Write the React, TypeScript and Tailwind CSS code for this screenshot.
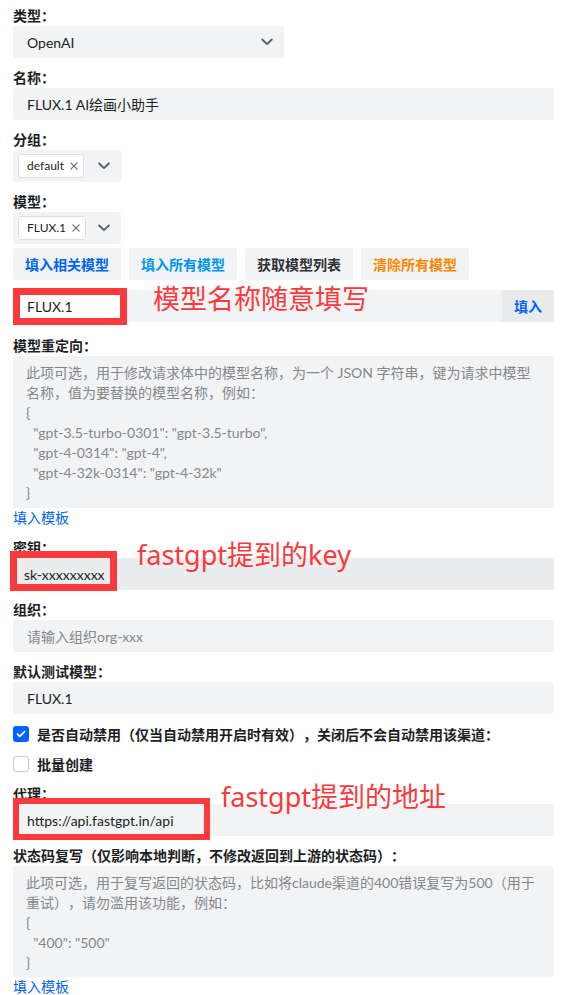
import React from "react";

const Label = ({ children }: { children: React.ReactNode }) => (
  <div className="h-[20px] leading-[20px] font-semibold text-[#1c1f23]">{children}</div>
);

const Chevron = () => (
  <svg width="12" height="8" viewBox="0 0 12 8" fill="none">
    <path d="M1.2 1.5l4.8 4.6 4.8-4.6" stroke="#5b5e62" strokeWidth="1.9" strokeLinecap="round" strokeLinejoin="round" />
  </svg>
);

const Tag = ({ text }: { text: string }) => (
  <div className="flex h-[24px] items-center gap-[6px] rounded-[3px] border border-[#dcdee0] bg-white pl-[8px] pr-[5px] text-[12px] text-[#1c1f23]">
    <span>{text}</span>
    <svg width="8" height="8" viewBox="0 0 9 9">
      <path d="M1 1l7 7M8 1L1 8" stroke="#6b6e72" strokeWidth="1.3" strokeLinecap="round" />
    </svg>
  </div>
);

const Input = ({ children }: { children?: React.ReactNode }) => (
  <div className="flex h-[32px] items-center rounded-[3px] bg-[#f2f3f4] pl-[14px] text-[#1c1f23]">{children}</div>
);

const TemplateLink = () => <div className="h-[20px] leading-[20px] text-[#0064fa]">填入模板</div>;

export default function App() {
  return (
    <div className="relative w-[574px] bg-white pl-[13px] pr-[20px] pt-[6px] pb-[4px] font-['Lato','Noto_Sans_CJK_SC',sans-serif] text-[14px] text-[#1c1f23] [text-spacing-trim:space-all]">
      <Label>类型：</Label>
      <div className="flex h-[32px] w-[271px] items-center justify-between rounded-[3px] bg-[#f2f3f4] pl-[14px] pr-[11px]">
        <span>OpenAI</span>
        <Chevron />
      </div>

      <div className="mt-[10px]">
        <Label>名称：</Label>
        <Input>FLUX.1 AI绘画小助手</Input>
      </div>

      <div className="mt-[10px]">
        <Label>分组：</Label>
        <div className="flex h-[32px] w-[109px] items-center justify-between rounded-[3px] bg-[#f2f3f4] pl-[5px] pr-[12px]">
          <Tag text="default" />
          <Chevron />
        </div>
      </div>

      <div className="mt-[10px]">
        <Label>模型：</Label>
        <div className="flex h-[32px] w-[108px] items-center justify-between rounded-[3px] bg-[#f2f3f4] pl-[5px] pr-[11px]">
          <Tag text="FLUX.1" />
          <Chevron />
        </div>
      </div>

      <div className="mt-[4px] flex gap-[8px] font-semibold">
        <button className="h-[32px] w-[108px] rounded-[3px] bg-[#f2f3f4] text-[#0064fa]">填入相关模型</button>
        <button className="h-[32px] w-[108px] rounded-[3px] bg-[#f2f3f4] text-[#0095ee]">填入所有模型</button>
        <button className="h-[32px] w-[108px] rounded-[3px] bg-[#f2f3f4] text-[#2f3135]">获取模型列表</button>
        <button className="h-[32px] w-[108px] rounded-[3px] bg-[#f2f3f4] text-[#fc8800]">清除所有模型</button>
      </div>

      <div className="mt-[10px] flex h-[32px]">
        <div className="flex-1 rounded-l-[3px] bg-[#f2f3f4]" />
        <button className="w-[52px] rounded-r-[3px] bg-[#e9eaeb] font-semibold text-[#0064fa]">填入</button>
      </div>

      <div className="mt-[14px]">
        <Label>模型重定向：</Label>
        <div className="rounded-[3px] bg-[#f2f3f4] pb-[5px] pl-[13px] pt-[7px] leading-[20px] text-[#85878a]">
          <div>此项可选，用于修改请求体中的模型名称，为一个 JSON 字符串，键为请求中模型</div>
          <div>名称，值为要替换的模型名称，例如：</div>
          <div>{"{"}</div>
          <div className="whitespace-pre">{'  "gpt-3.5-turbo-0301": "gpt-3.5-turbo",'}</div>
          <div className="whitespace-pre">{'  "gpt-4-0314": "gpt-4",'}</div>
          <div className="whitespace-pre">{'  "gpt-4-32k-0314": "gpt-4-32k"'}</div>
          <div>{"}"}</div>
        </div>
        <TemplateLink />
      </div>

      <div className="mt-[10px]">
        <Label>密钥：</Label>
        <div className="flex h-[32px] items-center rounded-[3px] bg-[#ebeced] pl-[11px]">sk-xxxxxxxxx</div>
      </div>

      <div className="mt-[10px]">
        <Label>组织：</Label>
        <Input>
          <span className="text-[#85878a]">请输入组织org-xxx</span>
        </Input>
      </div>

      <div className="mt-[10px]">
        <Label>默认测试模型：</Label>
        <Input>FLUX.1</Input>
      </div>

      <div className="mt-[10px] flex h-[20px] items-center gap-[8px]">
        <div className="flex h-[16px] w-[16px] items-center justify-center rounded-[3px] bg-[#0064fa]">
          <svg width="10" height="8" viewBox="0 0 10 8" fill="none">
            <path d="M1.5 4.2l2.3 2.2L8.5 1.6" stroke="white" strokeWidth="1.7" strokeLinecap="round" strokeLinejoin="round" />
          </svg>
        </div>
        <span className="font-semibold">是否自动禁用（仅当自动禁用开启时有效），关闭后不会自动禁用该渠道：</span>
      </div>

      <div className="mt-[10px] flex h-[20px] items-center gap-[8px]">
        <div className="h-[16px] w-[16px] rounded-[3px] border-[1.5px] border-[#c6cacd] bg-white" />
        <span className="font-semibold">批量创建</span>
      </div>

      <div className="mt-[10px]">
        <Label>代理：</Label>
        <Input>https://api.fastgpt.in/api</Input>
      </div>

      <div className="mt-[10px]">
        <Label>状态码复写（仅影响本地判断，不修改返回到上游的状态码）：</Label>
        <div className="rounded-[3px] bg-[#f2f3f4] pb-[4px] pl-[13px] pt-[7px] leading-[20px] text-[#85878a]">
          <div>此项可选，用于复写返回的状态码，比如将claude渠道的400错误复写为500（用于</div>
          <div>重试），请勿滥用该功能，例如：</div>
          <div>{"{"}</div>
          <div className="whitespace-pre">{'  "400": "500"'}</div>
          <div>{"}"}</div>
        </div>
        <TemplateLink />
      </div>

      {/* annotation overlays */}
      <div className="absolute left-[13px] top-[288px] flex h-[37px] w-[114px] items-center border-[7px] border-[#fa3a3c] bg-white pl-[7px]">
        FLUX.1
      </div>
      <div className="absolute left-[153px] top-[285px] font-['Noto_Sans','Noto_Sans_CJK_SC',sans-serif] text-[27px] leading-none text-[#fa3a3c]">模型名称随意填写</div>

      <div className="absolute left-[10px] top-[551px] h-[40px] w-[107px] border-[7px] border-[#fa3a3c]" />
      <div className="absolute left-[137px] top-[541px] font-['Noto_Sans','Noto_Sans_CJK_SC',sans-serif] text-[27px] leading-none text-[#fa3a3c]">fastgpt提到的key</div>

      <div className="absolute left-[13px] top-[798px] h-[42px] w-[197px] border-[6px] border-[#fa3a3c]" />
      <div className="absolute left-[221px] top-[783px] font-['Noto_Sans','Noto_Sans_CJK_SC',sans-serif] text-[27px] leading-none text-[#fa3a3c]">fastgpt提到的地址</div>
    </div>
  );
}
